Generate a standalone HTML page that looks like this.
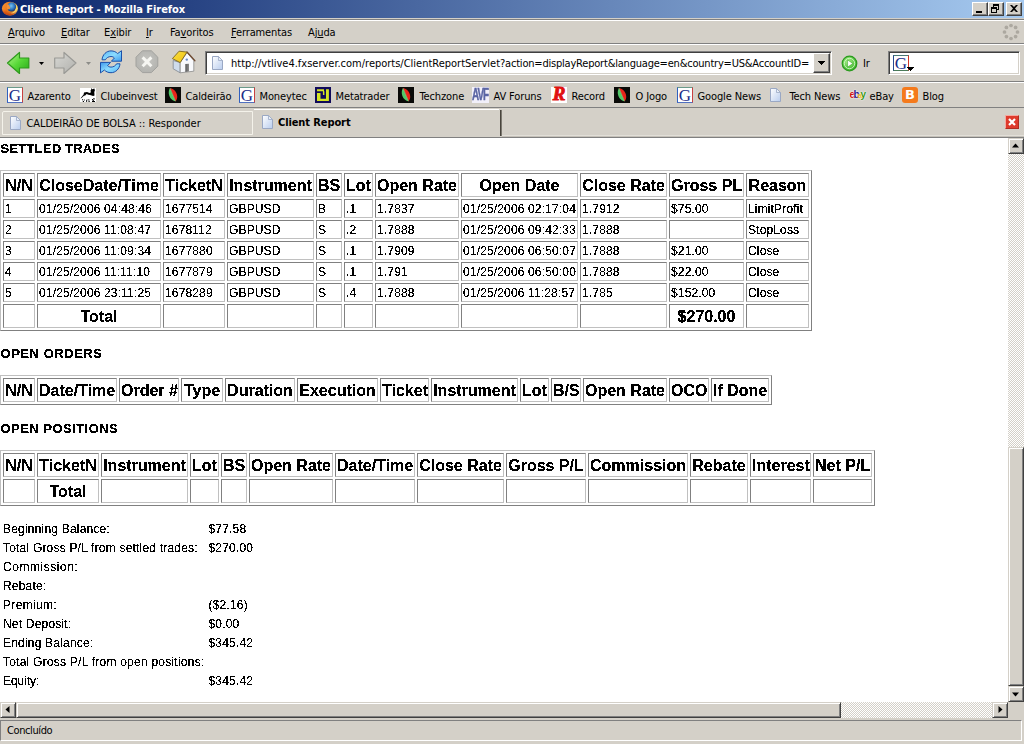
<!DOCTYPE html>
<html>
<head>
<meta charset="utf-8">
<title>Client Report - Mozilla Firefox</title>
<style>
html,body{margin:0;padding:0;background:#d4d0c8;}
body{width:1024px;height:744px;overflow:hidden;position:relative;}
#win{position:absolute;left:0;top:0;width:1024px;height:744px;overflow:hidden;background:#d4d0c8;
  font-family:"DejaVu Sans Condensed","DejaVu Sans","Liberation Sans",sans-serif;font-size:11px;color:#000;letter-spacing:-0.12px;}
.abs{position:absolute;}
.ui{position:absolute;white-space:nowrap;line-height:13px;height:13px;}
/* ---------- title bar ---------- */
#title{position:absolute;left:0;top:0;width:1024px;height:18px;background:linear-gradient(to right,#0a246a 0%,#a6caf0 100%);}
#title .t{position:absolute;left:20px;top:3px;color:#fff;font-weight:bold;font-size:11px;line-height:13px;white-space:nowrap;letter-spacing:-0.05px;}
.wbtn{position:absolute;top:2px;width:16px;height:14px;background:#d4d0c8;box-sizing:border-box;
  border:1px solid;border-color:#fff #404040 #404040 #fff;box-shadow:inset -1px -1px 0 #808080;}
/* ---------- generic etched lines ---------- */
.hl{position:absolute;left:0;width:1024px;height:1px;}

/* ---------- menubar ---------- */
.mi{position:absolute;top:26px;line-height:13px;height:13px;white-space:nowrap;}
.mi u{text-decoration:underline;text-underline-offset:1px;}
/* ---------- sunken text fields ---------- */
.field{position:absolute;background:#fff;box-sizing:border-box;border:1px solid;border-color:#808080 #fff #fff #808080;
  box-shadow:inset 1px 1px 0 #404040, inset -1px -1px 0 #d4d0c8;}
.btn{position:absolute;background:#d4d0c8;box-sizing:border-box;border:1px solid;border-color:#fff #404040 #404040 #fff;
  box-shadow:inset -1px -1px 0 #808080;}
.bm{position:absolute;top:90px;margin-left:0.5px;line-height:13px;height:13px;white-space:nowrap;}
.ic{position:absolute;top:87px;width:16px;height:16px;}

.track{position:absolute;background-color:#ebe9e4;background-image:linear-gradient(45deg,#d4d0c8 25%,transparent 25%,transparent 75%,#d4d0c8 75%),linear-gradient(45deg,#d4d0c8 25%,transparent 25%,transparent 75%,#d4d0c8 75%);background-size:2px 2px;background-position:0 0,1px 1px;background-color:#fff;}
.sb{position:absolute;background:#d4d0c8;box-sizing:border-box;border:1px solid;border-color:#d4d0c8 #404040 #404040 #d4d0c8;
  box-shadow:inset 1px 1px 0 #fff, inset -1px -1px 0 #808080;}
/* ---------- content ---------- */
#content{position:absolute;left:0;top:138px;width:1008px;height:564px;background:#fff;overflow:hidden;
  font-family:"Liberation Sans",sans-serif;color:#000;letter-spacing:0;}
.h,table.r,table.s{filter:url(#alias);}
.h{position:absolute;left:0;font-weight:bold;font-size:13px;line-height:15px;white-space:nowrap;letter-spacing:0.2px;}
table.r{position:absolute;left:0;border-collapse:separate;border-spacing:2px;table-layout:fixed;
  border:1px solid;border-color:#c0c0c0 #808080 #808080 #c0c0c0;margin:0;}
table.r td,table.r th{border:1px solid;border-color:#808080 #c0c0c0 #c0c0c0 #808080;padding:1px;box-sizing:border-box;
  overflow:hidden;white-space:nowrap;}
table.r th{font-weight:bold;font-size:16px;line-height:20px;height:24px;text-align:center;padding:2px 1px 0 1px;}
table.r td{font-size:12px;line-height:15px;height:19px;text-align:left;letter-spacing:0.15px;padding:2px 1px 0 1px;}
table.s{position:absolute;left:0;top:381px;border-collapse:separate;border-spacing:2px;margin:0;}
table.s td{padding:1px;font-size:12px;line-height:15px;height:15px;white-space:nowrap;letter-spacing:0.2px;}
</style>
</head>
<body>
<svg width="0" height="0" style="position:absolute;left:0;top:0"><defs><filter id="alias" x="0" y="0" width="100%" height="100%" color-interpolation-filters="sRGB"><feComponentTransfer><feFuncA type="discrete" tableValues="0 0 0 1 1 1 1 1"/></feComponentTransfer></filter></defs></svg>
<div id="win">

<!-- TITLE BAR -->
<div id="title">
  <svg class="abs" style="left:0px;top:0px" width="20" height="18" viewBox="0 0 20 18">
    <defs>
      <radialGradient id="gGlobe" cx="0.45" cy="0.4" r="0.65"><stop offset="0" stop-color="#78c4f0"/><stop offset="0.55" stop-color="#2f78c4"/><stop offset="1" stop-color="#10285c"/></radialGradient>
      <linearGradient id="gFox" x1="0" y1="0" x2="1" y2="0.35"><stop offset="0" stop-color="#f4963a"/><stop offset="0.45" stop-color="#ee7a1c"/><stop offset="0.8" stop-color="#f4b43c"/><stop offset="1" stop-color="#f8dc70"/></linearGradient>
      <linearGradient id="gFoxV" x1="0" y1="0" x2="0" y2="1"><stop offset="0.55" stop-color="#c03008" stop-opacity="0"/><stop offset="1" stop-color="#b02408" stop-opacity="0.85"/></linearGradient>
    </defs>
    <ellipse cx="9.9" cy="8.6" rx="8" ry="6.8" fill="url(#gFox)"/>
    <ellipse cx="9.9" cy="8.6" rx="8" ry="6.8" fill="url(#gFoxV)"/>
    <circle cx="11.6" cy="6.9" r="4.6" fill="url(#gGlobe)"/>
    <path d="M7.4 4.2 C8.6 4.4 9.4 5.2 9.2 6.2 C10.2 6.6 10.6 7.4 10 8.4 C9.4 9.4 8.2 9.6 7.2 9 C6.4 8 6.4 5.6 7.4 4.2 Z" fill="#f0903a"/>
    <path d="M16.2 4.2 C17.6 6 17.6 9 16 11.2 C14.6 13 12.4 13.6 10.6 13 C12.8 12.6 14.6 11.4 15.4 9.4 C16 7.8 16.4 6 16.2 4.2 Z" fill="#f8d468"/>
  </svg>
  <div class="t">Client Report - Mozilla Firefox</div>
  <div class="wbtn" style="left:972px;"></div>
  <div class="abs" style="left:976px;top:11px;width:6px;height:2px;background:#000;"></div>
  <div class="wbtn" style="left:988px;"></div>
  <div class="abs" style="left:993px;top:4px;width:6px;height:6px;box-sizing:border-box;border:1px solid #000;border-top-width:2px;"></div>
  <div class="abs" style="left:991px;top:7px;width:6px;height:6px;box-sizing:border-box;border:1px solid #000;border-top-width:2px;background:#d4d0c8;"></div>
  <div class="wbtn" style="left:1006px;"></div>
  <svg class="abs" style="left:1010px;top:5px" width="8" height="7" viewBox="0 0 8 7"><path d="M0 0 h2 l2 2 l2 -2 h2 l-3 3.5 l3 3.5 h-2 l-2 -2 l-2 2 h-2 l3 -3.5 z" fill="#000"/></svg>
</div>


<!-- toolbox etched lines -->
<div class="hl" style="top:18px;background:#d4d0c8"></div>
<div class="hl" style="top:19px;background:#808080"></div>
<div class="hl" style="top:20px;background:#fff"></div>
<div class="hl" style="top:43px;background:#808080"></div>
<div class="hl" style="top:44px;background:#fff"></div>
<div class="hl" style="top:81px;background:#808080"></div>
<div class="hl" style="top:82px;background:#fff"></div>
<div class="hl" style="top:107px;background:#808080"></div>

<!-- MENU BAR -->
<div class="mi" style="left:8px"><u>A</u>rquivo</div>
<div class="mi" style="left:61px"><u>E</u>ditar</div>
<div class="mi" style="left:104px">E<u>x</u>ibir</div>
<div class="mi" style="left:146px"><u>I</u>r</div>
<div class="mi" style="left:170px">Fa<u>v</u>oritos</div>
<div class="mi" style="left:231px"><u>F</u>erramentas</div>
<div class="mi" style="left:308px">Aj<u>u</u>da</div>
<svg class="abs" style="left:1002px;top:23px" width="18" height="18" viewBox="0 0 18 18">
  <g fill="#aca8a0">
    <circle cx="9" cy="2.5" r="1.85"/><circle cx="13.6" cy="4.4" r="1.85"/><circle cx="15.5" cy="9" r="1.85"/><circle cx="13.6" cy="13.6" r="1.85"/>
    <circle cx="9" cy="15.5" r="1.85"/><circle cx="4.4" cy="13.6" r="1.85"/><circle cx="2.5" cy="9" r="1.85"/><circle cx="4.4" cy="4.4" r="1.85"/>
  </g>
</svg>

<!-- NAV BAR -->
<svg class="abs" style="left:0;top:45px" width="200" height="36" viewBox="0 0 200 36">
  <defs>
    <linearGradient id="gGreen" x1="0" y1="0" x2="1" y2="1"><stop offset="0" stop-color="#b8f890"/><stop offset="0.5" stop-color="#58d838"/><stop offset="1" stop-color="#28a818"/></linearGradient>
    <linearGradient id="gGray" x1="0" y1="0" x2="1" y2="1"><stop offset="0" stop-color="#d8d8d4"/><stop offset="1" stop-color="#b0b0ac"/></linearGradient>
    <linearGradient id="gBlue" x1="0" y1="0" x2="0" y2="1"><stop offset="0" stop-color="#2f86e6"/><stop offset="0.5" stop-color="#7fd0fb"/><stop offset="1" stop-color="#2f86e6"/></linearGradient>
  </defs>
  <!-- back -->
  <path d="M7.5 18 L19.5 7.5 L19.5 13 L28.8 13 L28.8 23 L19.5 23 L19.5 28.5 Z" fill="url(#gGreen)" stroke="#2e9a1c" stroke-width="1.2" stroke-linejoin="round"/>
  <path d="M39 17 L44 17 L41.5 20 Z" fill="#000"/>
  <!-- forward -->
  <path d="M76 18 L64 7.5 L64 13 L54.7 13 L54.7 23 L64 23 L64 28.5 Z" fill="url(#gGray)" stroke="#9a9a96" stroke-width="1.2" stroke-linejoin="round"/>
  <path d="M86 17 L91 17 L88.5 20 Z" fill="#8c8c88"/>
</svg>

<!-- reload / stop / home -->
<svg class="abs" style="left:96px;top:47px" width="30" height="30" viewBox="0 0 30 30">
  <defs><linearGradient id="gRel" x1="0" y1="0" x2="1" y2="1"><stop offset="0" stop-color="#58b4f6"/><stop offset="0.5" stop-color="#8cdcff"/><stop offset="1" stop-color="#3c98ec"/></linearGradient></defs>
  <g fill="url(#gRel)" stroke="#1a50aa" stroke-width="1" stroke-linejoin="round">
    <path id="relA" d="M6 12.8 C6.5 7.5 10.5 3.9 15 3.9 C17.8 3.9 20 4.9 21.6 6.6 L25.5 3.7 L25.5 14.2 L15.4 14.2 L18.4 11 C17.5 10 16.4 9.5 15 9.5 C12.5 9.5 10.4 10.8 9.4 12.8 Z"/>
    <path d="M6 12.8 C6.5 7.5 10.5 3.9 15 3.9 C17.8 3.9 20 4.9 21.6 6.6 L25.5 3.7 L25.5 14.2 L15.4 14.2 L18.4 11 C17.5 10 16.4 9.5 15 9.5 C12.5 9.5 10.4 10.8 9.4 12.8 Z" transform="rotate(180 15 14.8)"/>
  </g>
</svg>
<svg class="abs" style="left:132px;top:47px" width="30" height="30" viewBox="0 0 30 30">
  <defs><radialGradient id="gStop" cx="0.5" cy="0.45" r="0.6"><stop offset="0" stop-color="#c6c6c2"/><stop offset="1" stop-color="#b2b2ae"/></radialGradient></defs>
  <path d="M10.4 3.8 L19.4 3.8 L25.8 10.2 L25.8 19.2 L19.4 25.6 L10.4 25.6 L4.0 19.2 L4.0 10.2 Z" fill="url(#gStop)" stroke="#a2a29e" stroke-width="1"/>
  <path d="M10.6 10.4 L19.4 19.2 M19.4 10.4 L10.6 19.2" stroke="#f6f6f2" stroke-width="3" stroke-linecap="butt"/>
</svg>
<svg class="abs" style="left:168px;top:47px" width="30" height="30" viewBox="0 0 30 30">
  <defs>
    <linearGradient id="gRoof" x1="0" y1="0" x2="1" y2="1"><stop offset="0" stop-color="#fae040"/><stop offset="1" stop-color="#f0c010"/></linearGradient>
    <linearGradient id="gDoor" x1="0" y1="0" x2="1" y2="0"><stop offset="0" stop-color="#5a5a5a"/><stop offset="1" stop-color="#8c8c8c"/></linearGradient>
  </defs>
  <!-- side wall -->
  <path d="M5.2 13.5 L12.2 15.5 L12.2 25.8 L5.2 21.8 Z" fill="#cfdcec" stroke="#808890" stroke-width="0.8" stroke-linejoin="round"/>
  <!-- front wall -->
  <path d="M19 5.6 L25.8 13.4 L25.8 24.2 L12.2 25.8 L12.2 15.5 Z" fill="#f8f9fc" stroke="#8a8a8a" stroke-width="0.8" stroke-linejoin="round"/>
  <!-- door -->
  <path d="M17.3 25 L17.3 17 L21 16.8 L21 24.6 Z" fill="url(#gDoor)"/>
  <!-- window -->
  <circle cx="18.8" cy="12.6" r="1.2" fill="#6c8cc8"/>
  <!-- right roof edge -->
  <path d="M19 5 L26.9 13.8" stroke="#6e4a30" stroke-width="1.3" stroke-linecap="round"/>
  <!-- roof -->
  <path d="M11.1 4.2 L19 5.1 L12.2 15.6 L4.4 11.6 Z" fill="url(#gRoof)" stroke="#7a6420" stroke-width="0.9" stroke-linejoin="round"/>
</svg>

<!-- URL bar -->
<div class="field" style="left:205px;top:51px;width:627px;height:24px;"></div>
<svg class="abs" style="left:211px;top:55px" width="14" height="16" viewBox="0 0 14 16">
  <defs><linearGradient id="gPage" x1="0" y1="0" x2="1" y2="1"><stop offset="0" stop-color="#ffffff"/><stop offset="1" stop-color="#b9cdee"/></linearGradient></defs>
  <path d="M1.5 1.5 L7.5 1.5 L11.5 5.5 L11.5 14.5 L1.5 14.5 Z" fill="url(#gPage)" stroke="#9aa8c4" stroke-width="1"/>
  <path d="M7.5 1.5 L7.5 5.5 L11.5 5.5 Z" fill="#e8eef8" stroke="#9aa8c4" stroke-width="0.8"/>
</svg>
<div class="ui" style="left:231px;top:57px;letter-spacing:-0.005px;">http://vtlive4.fxserver.com/reports/ClientReportServlet<span style="letter-spacing:-0.205px;">?action=displayReport&amp;language=en&amp;country=US&amp;AccountID=</span></div>
<div class="btn" style="left:813px;top:53px;width:17px;height:20px;"></div>
<svg class="abs" style="left:818px;top:61px" width="7" height="4" viewBox="0 0 7 4" shape-rendering="crispEdges"><path d="M0 0 H7 V1 H6 V2 H5 V3 H4 V4 H3 V3 H2 V2 H1 V1 H0 Z" fill="#000"/></svg>

<!-- Go -->
<svg class="abs" style="left:841px;top:55px" width="17" height="17" viewBox="0 0 17 17">
  <defs><radialGradient id="gGo" cx="0.4" cy="0.35" r="0.7"><stop offset="0" stop-color="#a8f088"/><stop offset="1" stop-color="#30b020"/></radialGradient></defs>
  <circle cx="8.5" cy="8.5" r="7.3" fill="url(#gGo)" stroke="#2a9a1e" stroke-width="1.2"/>
  <circle cx="8.5" cy="8.5" r="5.2" fill="none" stroke="#e8ffe0" stroke-width="0.9" opacity="0.8"/>
  <path d="M6.6 4.9 L11.8 8.5 L6.6 12.1 Z" fill="#ffffff" stroke="#2a9a1e" stroke-width="0.5"/>
</svg>
<div class="ui" style="left:863px;top:57px;">Ir</div>

<!-- Search box -->
<div class="field" style="left:888px;top:51px;width:132px;height:24px;"></div>
<div class="abs" style="left:893px;top:55px;width:16px;height:16px;box-sizing:border-box;background:#fff;border:1px solid;border-color:#4a7a78 #d03828 #4a7a58 #284890;"></div>
<div class="abs" style="left:894px;top:54px;width:14px;height:18px;text-align:center;font:normal 17px/19px 'Liberation Serif',serif;color:#1c2c88;letter-spacing:0;">G</div>
<svg class="abs" style="left:907px;top:67px" width="7" height="4" viewBox="0 0 7 4" shape-rendering="crispEdges"><path d="M0 0 H7 V1 H6 V2 H5 V3 H4 V4 H3 V3 H2 V2 H1 V1 H0 Z" fill="#000"/></svg>

<!-- BOOKMARKS TOOLBAR -->
<div class="ic" style="left:7px;box-sizing:border-box;background:#fff;border:1px solid;border-color:#6a9a8a #c84040 #5070c0 #3060c0;"></div>
<div class="abs" style="left:8px;top:86px;width:14px;height:18px;text-align:center;font:normal 17px/19px 'Liberation Serif',serif;color:#1c2c88;letter-spacing:0;">G</div>
<div class="bm" style="left:27px">Azarento</div>
<svg class="abs" style="left:80px;top:88px" width="16" height="14" viewBox="0 0 16 14"><rect width="16" height="14" fill="#fff"/>
  <path d="M11 0 L12.2 1.3 L14.4 0.4 L14.9 2.6 L14.3 4 L14.5 7.6 L13.2 8 L10 7 L8.4 6.8 L6.6 6 L5.2 7.6 L3.9 7.7 L1.6 10 L0.4 10.6 L3.6 6.4 L4 4.4 L7 4.1 L9.5 5 L11 4.2 L10.4 2.6 L11.2 2 Z" fill="#000"/>
  <path d="M2 11.2h1v1h-1z M3.8 11.4h1v1h-1z M2.8 13h1.2v1h-1.2z M6.2 11.8h.9v2.2h-.9z M7.5 11.4h2v.8h-2z M8.5 12.8h1.2v1.2h-1.2z M12 11h1v1h-1z M13.2 10.2h1.5v1.4h-1.5z M12.6 12h1.2v1h-1.2z M12 13h3v1h-3z" fill="#000"/></svg>
<div class="bm" style="left:100px">Clubeinvest</div>
<svg class="ic" style="left:165px" viewBox="0 0 16 16"><rect width="16" height="16" fill="#0a0a08"/>
  <path d="M5 1.2 C9.5 1.6 12.8 6.5 12.2 10.5 C12 12.4 11.3 13.6 10.5 14.3 Z" fill="#e8241a"/>
  <path d="M5 1.2 C3.2 3.5 3.4 8 5.4 11 C6.8 13 8.8 14.2 10.5 14.3 Z" fill="#52c868"/>
  <path d="M5 1.2 L10.5 14.3" fill="none" stroke="#c8e8a0" stroke-width="0.6" opacity="0.7"/></svg>
<div class="bm" style="left:185px">Caldeirão</div>
<div class="ic" style="left:239px;box-sizing:border-box;background:#fff;border:1px solid;border-color:#6a9a8a #c84040 #5070c0 #3060c0;"></div>
<div class="abs" style="left:240px;top:86px;width:14px;height:18px;text-align:center;font:normal 17px/19px 'Liberation Serif',serif;color:#1c2c88;letter-spacing:0;">G</div>
<div class="bm" style="left:259px">Moneytec</div>
<svg class="ic" style="left:315px" viewBox="0 0 16 16"><rect width="16" height="16" fill="#100a5a"/>
  <path d="M2 2.2 H9 V4.3 H9.4 V8 H7.9 V4.3 H2 Z" fill="#d4e424"/>
  <path d="M2 6 H5.5 V11.7 H11 V2.2 H13.9 V14 H2 Z" fill="#d4e424"/></svg>
<div class="bm" style="left:335px">Metatrader</div>
<svg class="ic" style="left:398px" viewBox="0 0 16 16"><rect width="16" height="16" fill="#0a0a08"/>
  <path d="M5 1.2 C9.5 1.6 12.8 6.5 12.2 10.5 C12 12.4 11.3 13.6 10.5 14.3 Z" fill="#e8241a"/>
  <path d="M5 1.2 C3.2 3.5 3.4 8 5.4 11 C6.8 13 8.8 14.2 10.5 14.3 Z" fill="#52c868"/>
  <path d="M5 1.2 L10.5 14.3" fill="none" stroke="#c8e8a0" stroke-width="0.6" opacity="0.7"/></svg>
<div class="bm" style="left:419px">Techzone</div>
<div class="ic" style="left:472px;width:17px;background:#f2f0fa;"></div>
<div class="abs" style="left:472px;top:86px;width:17px;height:18px;font:bold 17px/18px 'Liberation Sans',sans-serif;color:#5c66a4;letter-spacing:-1.6px;transform:scaleX(0.58);-webkit-text-stroke:0.5px #5c66a4;transform-origin:0 0;white-space:nowrap;">AVF</div>
<div class="bm" style="left:493px">AV Foruns</div>
<div class="ic" style="left:551px;background:#fff;"></div>
<div class="abs" style="left:551px;top:84px;width:16px;height:20px;text-align:center;font:italic bold 19px/20px 'Liberation Serif',serif;color:#e01010;letter-spacing:0;-webkit-text-stroke:0.9px #e01010;">R</div>
<div class="bm" style="left:571px">Record</div>
<svg class="ic" style="left:614px" viewBox="0 0 16 16"><rect width="16" height="16" fill="#0a0a08"/>
  <path d="M5 1.2 C9.5 1.6 12.8 6.5 12.2 10.5 C12 12.4 11.3 13.6 10.5 14.3 Z" fill="#e8241a"/>
  <path d="M5 1.2 C3.2 3.5 3.4 8 5.4 11 C6.8 13 8.8 14.2 10.5 14.3 Z" fill="#52c868"/>
  <path d="M5 1.2 L10.5 14.3" fill="none" stroke="#c8e8a0" stroke-width="0.6" opacity="0.7"/></svg>
<div class="bm" style="left:635px">O Jogo</div>
<div class="ic" style="left:677px;box-sizing:border-box;background:#fff;border:1px solid;border-color:#6a9a8a #c84040 #5070c0 #3060c0;"></div>
<div class="abs" style="left:678px;top:86px;width:14px;height:18px;text-align:center;font:normal 17px/19px 'Liberation Serif',serif;color:#1c2c88;letter-spacing:0;">G</div>
<div class="bm" style="left:697px">Google News</div>
<svg class="abs" style="left:769px;top:87px" width="14" height="16" viewBox="0 0 14 16">
  <path d="M1.5 1.5 L7.5 1.5 L11.5 5.5 L11.5 14.5 L1.5 14.5 Z" fill="url(#gPage)" stroke="#9aa8c4" stroke-width="1"/>
  <path d="M7.5 1.5 L7.5 5.5 L11.5 5.5 Z" fill="#e8eef8" stroke="#9aa8c4" stroke-width="0.8"/></svg>
<div class="bm" style="left:789px">Tech News</div>
<div class="abs" style="left:849.5px;top:88.5px;width:18px;height:12px;font:bold 10px/12px 'Liberation Sans',sans-serif;letter-spacing:-1.7px;white-space:nowrap;text-shadow:0 0 2px #fff,0 0 1px #fff;"><span style="color:#d01010">e</span><span style="color:#28108c">b</span><span style="color:#e8b010;font-size:8px">a</span><span style="color:#3c9818">y</span></div>
<div class="bm" style="left:869px">eBay</div>
<div class="ic" style="left:902px;background:#f47a1c;border-radius:3px;"></div>
<div class="abs" style="left:902px;top:87px;width:16px;height:16px;text-align:center;font:bold 13px/16px 'DejaVu Sans',sans-serif;color:#fff;letter-spacing:0;">B</div>
<div class="bm" style="left:922px">Blog</div>

<!-- TAB BAR -->
<div class="hl" style="top:108px;background:#d4d0c8"></div>
<div class="abs" style="left:2px;top:111px;width:251px;height:24px;box-sizing:border-box;border:1px solid #f4f2ea;border-radius:2px 0 0 0;"></div>
<svg class="abs" style="left:9px;top:115px" width="14" height="16" viewBox="0 0 14 16">
  <path d="M1.5 1.5 L7.5 1.5 L11.5 5.5 L11.5 14.5 L1.5 14.5 Z" fill="url(#gPage)" stroke="#9aa8c4" stroke-width="1"/>
  <path d="M7.5 1.5 L7.5 5.5 L11.5 5.5 Z" fill="#e8eef8" stroke="#9aa8c4" stroke-width="0.8"/></svg>
<div class="ui" style="left:26.5px;top:117px;letter-spacing:-0.05px;">CALDEIRÃO DE BOLSA :: Responder</div>
<div class="abs" style="left:254px;top:109px;width:245px;height:1px;background:#fff;"></div>
<div class="abs" style="left:500px;top:110px;width:1px;height:26px;background:#48443c;"></div>
<div class="abs" style="left:501px;top:110px;width:1px;height:26px;background:#7c7870;"></div>
<svg class="abs" style="left:261px;top:114px" width="14" height="16" viewBox="0 0 14 16">
  <path d="M1.5 1.5 L7.5 1.5 L11.5 5.5 L11.5 14.5 L1.5 14.5 Z" fill="url(#gPage)" stroke="#9aa8c4" stroke-width="1"/>
  <path d="M7.5 1.5 L7.5 5.5 L11.5 5.5 Z" fill="#e8eef8" stroke="#9aa8c4" stroke-width="0.8"/></svg>
<div class="ui" style="left:278px;top:116px;font-weight:bold;letter-spacing:-0.1px;">Client Report</div>
<div class="abs" style="left:1005px;top:115px;width:14px;height:14px;box-sizing:border-box;background:#de3a2c;border:1px solid;border-color:#f4a8a0 #b02c20 #b02c20 #f4a8a0;"></div>
<svg class="abs" style="left:1005px;top:115px" width="14" height="14" viewBox="0 0 14 14"><path d="M4 4 L10 10 M10 4 L4 10" stroke="#fff" stroke-width="2.2"/></svg>
<div class="abs" style="left:502px;top:135px;width:522px;height:1px;background:#e2dfd8"></div>
<div class="abs" style="left:502px;top:136px;width:522px;height:1px;background:#c4c0b8"></div>
<div class="hl" style="top:137px;background:#808080"></div>

<!-- CONTENT -->
<div id="content">
  <div class="h" style="top:3px;left:0.5px;letter-spacing:0.22px;">SETTLED TRADES</div>

  <table class="r" style="top:32px;width:812px;">
    <colgroup><col style="width:32px"><col style="width:124px"><col style="width:62px"><col style="width:87px"><col style="width:26px"><col style="width:29px"><col style="width:84px"><col style="width:117px"><col style="width:87px"><col style="width:75px"><col style="width:63px"></colgroup>
    <tr><th>N/N</th><th>CloseDate/Time</th><th>TicketN</th><th>Instrument</th><th>BS</th><th>Lot</th><th>Open Rate</th><th>Open Date</th><th>Close Rate</th><th>Gross PL</th><th>Reason</th></tr>
    <tr><td>1</td><td>01/25/2006 04:48:46</td><td>1677514</td><td>GBPUSD</td><td>B</td><td>.1</td><td>1.7837</td><td>01/25/2006 02:17:04</td><td>1.7912</td><td>$75.00</td><td>LimitProfit</td></tr>
    <tr><td>2</td><td>01/25/2006 11:08:47</td><td>1678112</td><td>GBPUSD</td><td>S</td><td>.2</td><td>1.7888</td><td>01/25/2006 09:42:33</td><td>1.7888</td><td>&nbsp;</td><td>StopLoss</td></tr>
    <tr><td>3</td><td>01/25/2006 11:09:34</td><td>1677880</td><td>GBPUSD</td><td>S</td><td>.1</td><td>1.7909</td><td>01/25/2006 06:50:07</td><td>1.7888</td><td>$21.00</td><td>Close</td></tr>
    <tr><td>4</td><td>01/25/2006 11:11:10</td><td>1677879</td><td>GBPUSD</td><td>S</td><td>.1</td><td>1.791</td><td>01/25/2006 06:50:00</td><td>1.7888</td><td>$22.00</td><td>Close</td></tr>
    <tr><td>5</td><td>01/25/2006 23:11:25</td><td>1678289</td><td>GBPUSD</td><td>S</td><td>.4</td><td>1.7888</td><td>01/25/2006 11:28:57</td><td>1.785</td><td>$152.00</td><td>Close</td></tr>
    <tr><th>&nbsp;</th><th>Total</th><th>&nbsp;</th><th>&nbsp;</th><th>&nbsp;</th><th>&nbsp;</th><th>&nbsp;</th><th>&nbsp;</th><th>&nbsp;</th><th>$270.00</th><th>&nbsp;</th></tr>
  </table>

  <div class="h" style="top:208px;left:0.5px;letter-spacing:0.54px;">OPEN ORDERS</div>

  <table class="r" style="top:237px;width:772px;">
    <colgroup><col style="width:32px"><col style="width:80px"><col style="width:60px"><col style="width:42px"><col style="width:70px"><col style="width:81px"><col style="width:49px"><col style="width:87px"><col style="width:29px"><col style="width:30px"><col style="width:84px"><col style="width:40px"><col style="width:58px"></colgroup>
    <tr><th>N/N</th><th>Date/Time</th><th>Order #</th><th>Type</th><th>Duration</th><th>Execution</th><th>Ticket</th><th>Instrument</th><th>Lot</th><th>B/S</th><th>Open Rate</th><th>OCO</th><th>If Done</th></tr>
  </table>

  <div class="h" style="top:283px;left:0.5px;letter-spacing:0.46px;">OPEN POSITIONS</div>

  <table class="r" style="top:312px;width:875px;">
    <colgroup><col style="width:32px"><col style="width:62px"><col style="width:87px"><col style="width:29px"><col style="width:26px"><col style="width:84px"><col style="width:80px"><col style="width:87px"><col style="width:80px"><col style="width:100px"><col style="width:58px"><col style="width:61px"><col style="width:59px"></colgroup>
    <tr><th>N/N</th><th>TicketN</th><th>Instrument</th><th>Lot</th><th>BS</th><th>Open Rate</th><th>Date/Time</th><th>Close Rate</th><th>Gross P/L</th><th>Commission</th><th>Rebate</th><th>Interest</th><th>Net P/L</th></tr>
    <tr><th>&nbsp;</th><th>Total</th><th>&nbsp;</th><th>&nbsp;</th><th>&nbsp;</th><th>&nbsp;</th><th>&nbsp;</th><th>&nbsp;</th><th>&nbsp;</th><th>&nbsp;</th><th>&nbsp;</th><th>&nbsp;</th><th>&nbsp;</th></tr>
  </table>

  <table class="s">
    <tr><td style="width:201px">Beginning Balance:</td><td>$77.58</td></tr>
    <tr><td>Total Gross P/L from settled trades:</td><td>$270.00</td></tr>
    <tr><td style="letter-spacing:0.55px">Commission:</td><td>&nbsp;</td></tr>
    <tr><td>Rebate:</td><td>&nbsp;</td></tr>
    <tr><td style="letter-spacing:0.34px">Premium:</td><td>($2.16)</td></tr>
    <tr><td>Net Deposit:</td><td>$0.00</td></tr>
    <tr><td>Ending Balance:</td><td>$345.42</td></tr>
    <tr><td style="letter-spacing:0.235px">Total Gross P/L from open positions:</td><td>&nbsp;</td></tr>
    <tr><td style="letter-spacing:-0.07px">Equity:</td><td>$345.42</td></tr>
  </table>
</div>

<!-- SCROLLBARS -->
<div class="track" style="left:1008px;top:138px;width:16px;height:564px;"></div>
<div class="sb" style="left:1008px;top:138px;width:16px;height:16px;"></div>
<svg class="abs" style="left:1012px;top:143px" width="8" height="5" viewBox="0 0 8 5"><path d="M0 4.5 L7 4.5 L3.5 0.5 Z" fill="#000"/></svg>
<div class="sb" style="left:1008px;top:447px;width:16px;height:239px;"></div>
<div class="sb" style="left:1008px;top:686px;width:16px;height:16px;"></div>
<svg class="abs" style="left:1012px;top:692px" width="8" height="5" viewBox="0 0 8 5"><path d="M0 0.5 L7 0.5 L3.5 4.5 Z" fill="#000"/></svg>

<div class="track" style="left:0;top:702px;width:1008px;height:16px;"></div>
<div class="sb" style="left:0;top:702px;width:16px;height:16px;"></div>
<svg class="abs" style="left:5px;top:706px" width="5" height="8" viewBox="0 0 5 8"><path d="M4.5 0 L4.5 7 L0.5 3.5 Z" fill="#000"/></svg>
<div class="sb" style="left:16px;top:702px;width:825px;height:16px;"></div>
<div class="sb" style="left:992px;top:702px;width:16px;height:16px;"></div>
<svg class="abs" style="left:998px;top:706px" width="5" height="8" viewBox="0 0 5 8"><path d="M0.5 0 L0.5 7 L4.5 3.5 Z" fill="#000"/></svg>
<div class="abs" style="left:1008px;top:702px;width:16px;height:16px;background:#d4d0c8;"></div>

<!-- STATUS BAR -->
<div class="abs" style="left:0;top:718px;width:1024px;height:26px;background:#d4d0c8;"></div>
<div class="abs" style="left:0;top:720px;width:1022px;height:21px;box-sizing:border-box;border:1px solid;border-color:#808080 #fff #fff #808080;"></div>
<div class="ui" style="left:7px;top:724px;letter-spacing:-0.4px;">Concluído</div>

</div>
</body>
</html>
